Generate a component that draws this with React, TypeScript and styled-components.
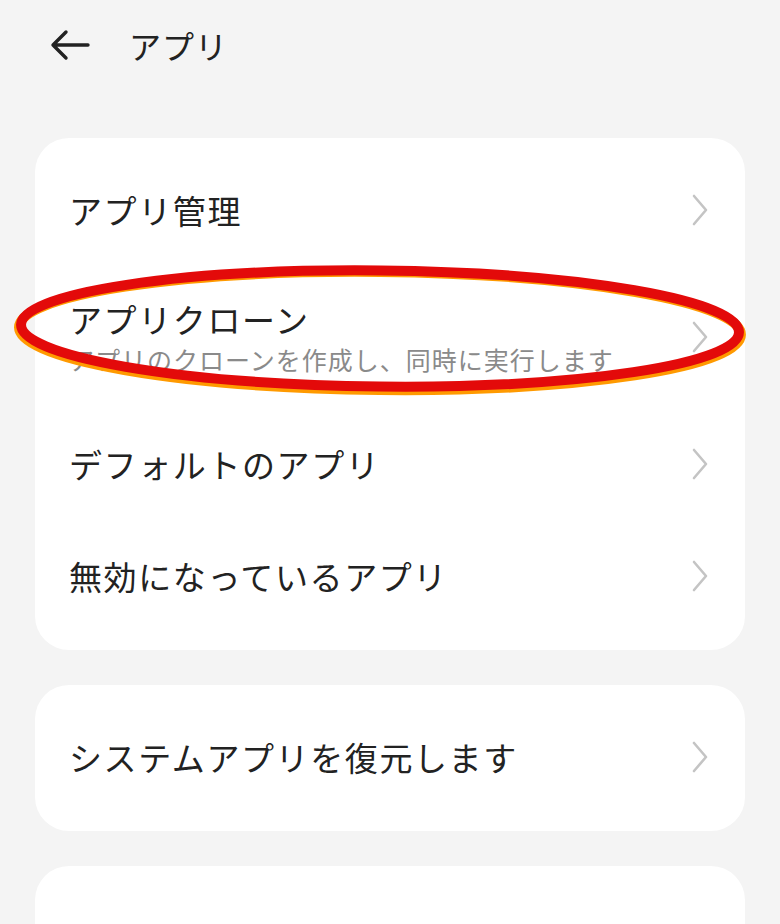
import React from "react";
import styled, { createGlobalStyle } from "styled-components";

const Global = createGlobalStyle`
  html, body { margin: 0; padding: 0; background: #f4f4f4; }
  body { font-family: "Noto Sans CJK JP", "Noto Sans", sans-serif; -webkit-font-smoothing: antialiased; }
`;

const Page = styled.div`
  position: relative;
  width: 780px;
  height: 924px;
  overflow: hidden;
  background: #f4f4f4;
  display: flex;
  flex-direction: column;
`;

const Header = styled.header`
  height: 90px;
  flex-shrink: 0;
  display: flex;
  align-items: center;
  padding-left: 49px;
  gap: 38px;
  margin-bottom: 48px;
`;

const Title = styled.h1`
  margin: 0;
  font-size: 32px;
  font-weight: 400;
  color: #222;
  letter-spacing: 1px;
  line-height: 40px;
`;

const Card = styled.section<{ $empty?: boolean }>`
  margin: 0 35px 35px;
  background: #fff;
  border-radius: 34px;
  padding: 16px 0 18px;
  display: flex;
  flex-direction: column;
  flex-shrink: 0;
  min-height: ${(p) => (p.$empty ? "146px" : "auto")};
  box-sizing: border-box;
`;

const Row = styled.div<{ $tall?: boolean }>`
  height: ${(p) => (p.$tall ? 142 : 112)}px;
  display: flex;
  align-items: center;
  padding: 0 34px 0 34px;
`;

const Texts = styled.div`
  flex: 1;
  display: flex;
  flex-direction: column;
  gap: 4px;
`;

const Label = styled.div`
  font-size: 33px;
  color: #222;
  letter-spacing: 1.6px;
  line-height: 40px;
`;

const Sub = styled.div`
  font-size: 25px;
  color: #8a8a8a;
  letter-spacing: 1px;
  line-height: 32px;
`;

const Overlay = styled.svg`
  position: absolute;
  left: 0;
  top: 0;
  pointer-events: none;
`;

const Chevron = () => (
  <svg width="22" height="34" viewBox="0 0 22 34" fill="none">
    <path d="M5 3 L17 17 L5 31" stroke="#c4c4c4" strokeWidth="2.6" strokeLinecap="round" strokeLinejoin="round" />
  </svg>
);

const BackArrow = () => (
  <svg width="42" height="32" viewBox="0 0 42 32" fill="none">
    <path d="M39 16 H4 M17 3 L4 16 L17 29" stroke="#222" strokeWidth="3.4" strokeLinecap="round" strokeLinejoin="round" />
  </svg>
);

const Item = ({ label, sub }: { label: string; sub?: string }) => (
  <Row $tall={!!sub}>
    <Texts>
      <Label>{label}</Label>
      {sub && <Sub>{sub}</Sub>}
    </Texts>
    <Chevron />
  </Row>
);

export default function App() {
  return (
    <>
      <Global />
      <Page>
        <Header>
          <BackArrow />
          <Title>アプリ</Title>
        </Header>
        <Card>
          <Item label="アプリ管理" />
          <Item label="アプリクローン" sub="アプリのクローンを作成し、同時に実行します" />
          <Item label="デフォルトのアプリ" />
          <Item label="無効になっているアプリ" />
        </Card>
        <Card>
          <Item label="システムアプリを復元します" />
        </Card>
        <Card $empty />
        <Overlay width="780" height="924" viewBox="0 0 780 924">
          <g transform="rotate(0.6 380 329)">
            <ellipse cx="380" cy="331" rx="361" ry="59" fill="none" stroke="#ff9a00" strokeWidth="10" />
            <ellipse cx="380" cy="328.5" rx="359" ry="58" fill="none" stroke="#e30a0a" strokeWidth="10" />
          </g>
        </Overlay>
      </Page>
    </>
  );
}
